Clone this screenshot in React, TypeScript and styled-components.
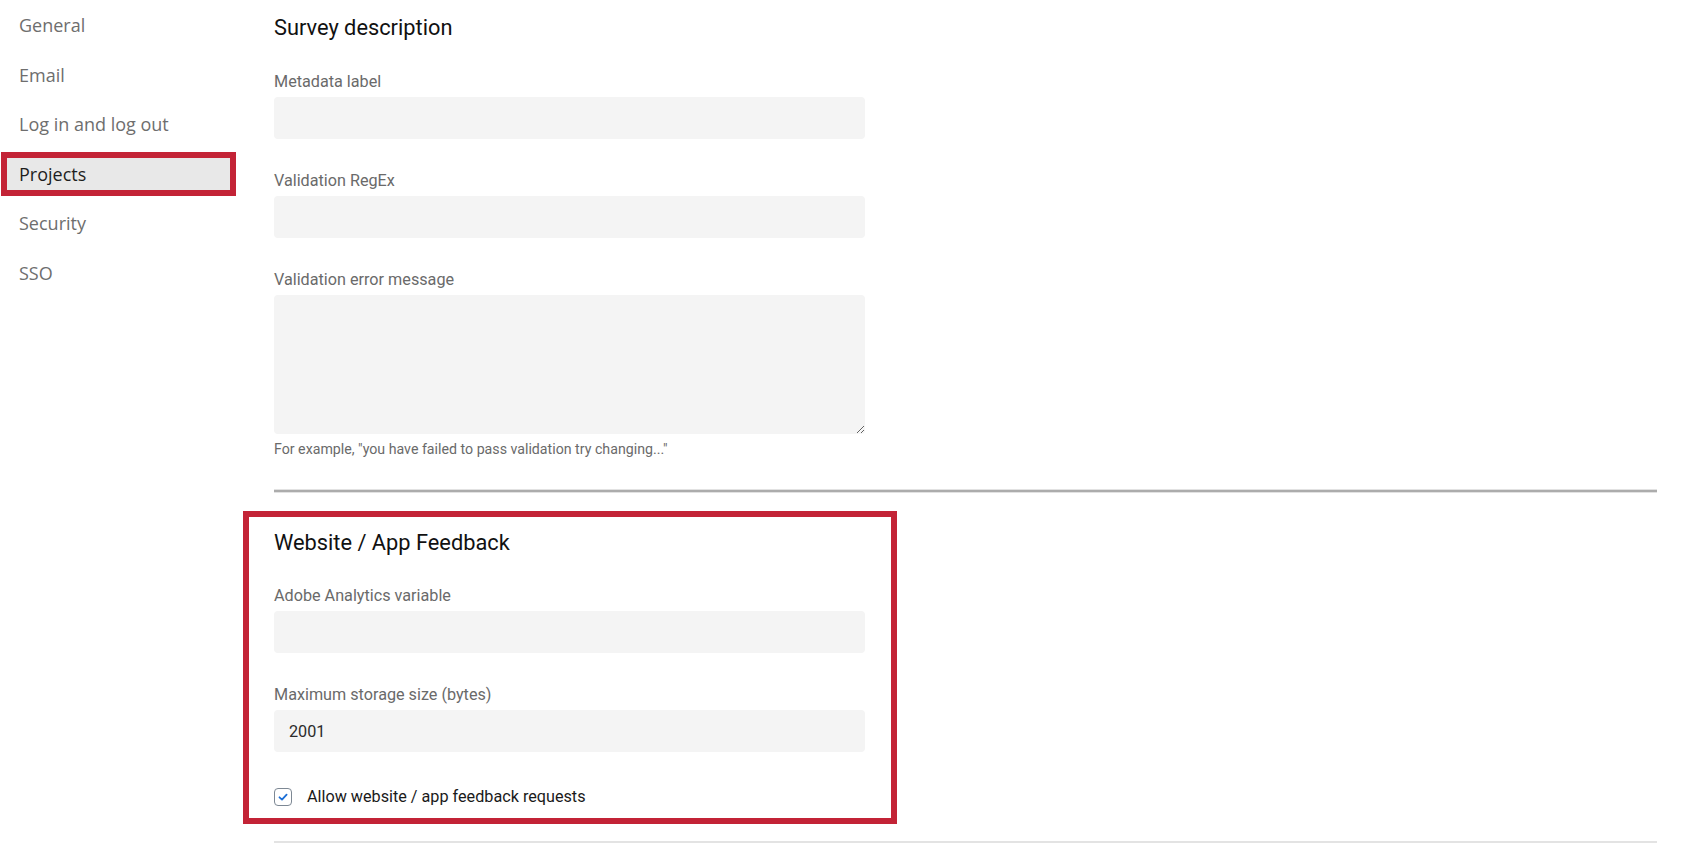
import styled, { createGlobalStyle } from "styled-components";

const navItems = ["General", "Email", "Log in and log out", "Projects", "Security", "SSO"];

const GlobalStyle = createGlobalStyle`
  html, body {
    margin: 0;
    padding: 0;
    background: #fff;
  }
  * {
    box-sizing: border-box;
  }
`;

const App = () => {
  return (
    <>
      <GlobalStyle />
      <Page>
        <SideNav>
          {navItems.map((item) => (
            <NavItem key={item} $active={item === "Projects"}>
              {item}
            </NavItem>
          ))}
        </SideNav>
        <Main>
          <Heading>Survey description</Heading>
          <Field>
            <Label>Metadata label</Label>
            <TextInput type="text" />
          </Field>
          <Field>
            <Label>Validation RegEx</Label>
            <TextInput type="text" />
          </Field>
          <Field>
            <Label>Validation error message</Label>
            <TextArea />
            <Hint>For example, "you have failed to pass validation try changing..."</Hint>
          </Field>
          <Divider />
          <Section>
            <Heading>Website / App Feedback</Heading>
            <Field>
              <Label>Adobe Analytics variable</Label>
              <TextInput type="text" />
            </Field>
            <Field>
              <Label>Maximum storage size (bytes)</Label>
              <TextInput type="text" defaultValue="2001" />
            </Field>
            <CheckRow>
              <CheckBox>
                <svg width="12" height="12" viewBox="0 0 12 12">
                  <path
                    d="M2.5 6.3 L5 8.6 L9.6 3.6"
                    fill="none"
                    stroke="#1d6fd6"
                    strokeWidth="1.8"
                    strokeLinecap="round"
                    strokeLinejoin="round"
                  />
                </svg>
              </CheckBox>
              Allow website / app feedback requests
            </CheckRow>
          </Section>
          <LightDivider />
        </Main>
      </Page>
    </>
  );
};

const Page = styled.div`
  display: flex;
  gap: 38px;
  width: 1700px;
  min-height: 850px;
  overflow: hidden;
`;

const SideNav = styled.nav`
  display: flex;
  flex-direction: column;
  gap: 5.6px;
  width: 235px;
  margin-left: 1px;
  padding-top: 3px;
  flex-shrink: 0;
`;

const NavItem = styled.div<{ $active: boolean }>`
  height: 44px;
  display: flex;
  align-items: center;
  padding-left: 18px;
  font-family: "Open Sans", sans-serif;
  font-size: 18px;
  color: ${(p) => (p.$active ? "#1d1d1d" : "#6e6e6e")};
  background: ${(p) => (p.$active ? "#e8e8e8" : "transparent")};
  outline: ${(p) => (p.$active ? "6px solid #c32336" : "none")};
  outline-offset: -6px;
`;

const Main = styled.main`
  flex: 1;
  padding: 14px 43px 0 0;
  font-family: Roboto, "Liberation Sans", sans-serif;
`;

const Heading = styled.h2`
  margin: 0 0 30px;
  font-size: 21.8px;
  line-height: 28px;
  font-weight: 400;
  color: #111;
`;

const Field = styled.div`
  display: flex;
  flex-direction: column;
  width: 591px;
  margin-bottom: 32px;

  &:last-of-type {
    margin-bottom: 0;
  }
`;

const Label = styled.label`
  font-size: 16.2px;
  line-height: 20px;
  color: #6a6a6a;
  margin-bottom: 5px;
`;

const TextInput = styled.input`
  height: 42px;
  border: none;
  border-radius: 4px;
  background: #f4f4f4;
  padding: 0 15px;
  font-family: Roboto, "Liberation Sans", sans-serif;
  font-size: 16.2px;
  color: #2b2b2b;
  outline: none;
`;

const TextArea = styled.textarea`
  height: 139px;
  border: none;
  border-radius: 4px;
  background: #f4f4f4;
  resize: vertical;
  outline: none;
`;

const Hint = styled.div`
  margin-top: 6px;
  font-size: 14.2px;
  line-height: 18px;
  color: #6a6a6a;
`;

const Divider = styled.hr`
  margin: 31px 0 37px;
  border: none;
  height: 2px;
  background: #acacac;
  box-shadow: 0 1px 0 #e2e2e2, 0 -1px 0 #e2e2e2;
`;

const Section = styled.section`
  position: relative;
  width: 591px;

  ${Heading} {
    margin-bottom: 29px;
  }

  /* red call-out frame drawn over the section */
  &::before {
    content: "";
    position: absolute;
    top: -18px;
    left: -31px;
    right: -32px;
    bottom: -18px;
    border: 6px solid #c32336;
    pointer-events: none;
  }
`;

const CheckRow = styled.div`
  display: flex;
  align-items: center;
  gap: 15px;
  margin-top: 36px;
  font-size: 16.2px;
  line-height: 18px;
  color: #1a1a1a;
`;

const CheckBox = styled.span`
  width: 18px;
  height: 18px;
  border: 1.5px solid #7d8894;
  border-radius: 4px;
  display: flex;
  align-items: center;
  justify-content: center;
  background: #fff;
`;

const LightDivider = styled.div`
  margin-top: 35px;
  height: 2px;
  background: #e3e3e3;
`;

export default App;
